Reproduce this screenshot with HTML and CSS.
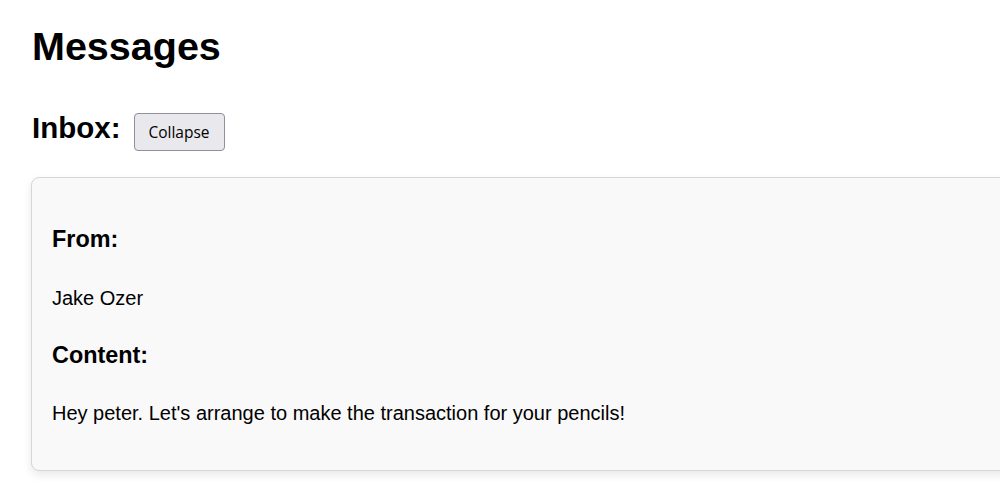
FILE: index.html
```html
<!DOCTYPE html>
<html lang="en">
<head>
<meta charset="utf-8">
<title>Messages</title>
<link rel="stylesheet" href="styles.css">
</head>
<body>
  <main class="page">
    <h1 class="title">Messages</h1>
    <div class="inbox-head">
      <h2 class="inbox-title">Inbox:</h2>
      <button class="btn" type="button">Collapse</button>
    </div>
    <section class="card">
      <h3 class="label">From:</h3>
      <p class="value">Jake Ozer</p>
      <h3 class="label">Content:</h3>
      <p class="value">Hey peter. Let's arrange to make the transaction for your pencils!</p>
    </section>
  </main>
</body>
</html>
```

FILE: styles.css
```css
body {
  margin: 0;
  background: #ffffff;
  color: #000000;
  font-family: "Liberation Sans", Arial, sans-serif;
}
.page {
  padding: 23px 0 30px 31px;
  overflow: hidden;
}
.title {
  font-size: 39.5px;
  font-weight: bold;
  margin: 0 0 0 1px;
  line-height: 46px;
}
.inbox-head {
  display: flex;
  align-items: flex-start;
  gap: 13px;
  margin-top: 42px;
}
.inbox-title {
  font-size: 29.5px;
  margin: 0 0 0 1px;
  line-height: 34px;
}
.btn {
  font-family: "Open Sans", "DejaVu Sans", sans-serif;
  font-size: 15.5px;
  padding: 0;
  height: 38px;
  width: 91px;
  margin-top: 2px;
  background: #e9e9ed;
  border: 1px solid #8f8f9d;
  border-radius: 4px;
  color: #000;
}
.card {
  margin-top: 26px;
  width: calc(100% + 80px);
  box-sizing: border-box;
  padding: 48px 20px 45px 20px;
  background: #f9f9f9;
  border: 1px solid #d6d6d6;
  border-radius: 8px;
  box-shadow: 0 4px 10px rgba(0, 0, 0, 0.09);
}
.label {
  font-size: 23.4px;
  margin: 0;
  line-height: 27px;
}
.value {
  font-size: 20px;
  margin: 33.5px 0 32px 0;
  line-height: 23px;
}
.value:last-child {
  margin-bottom: 0;
}
```
